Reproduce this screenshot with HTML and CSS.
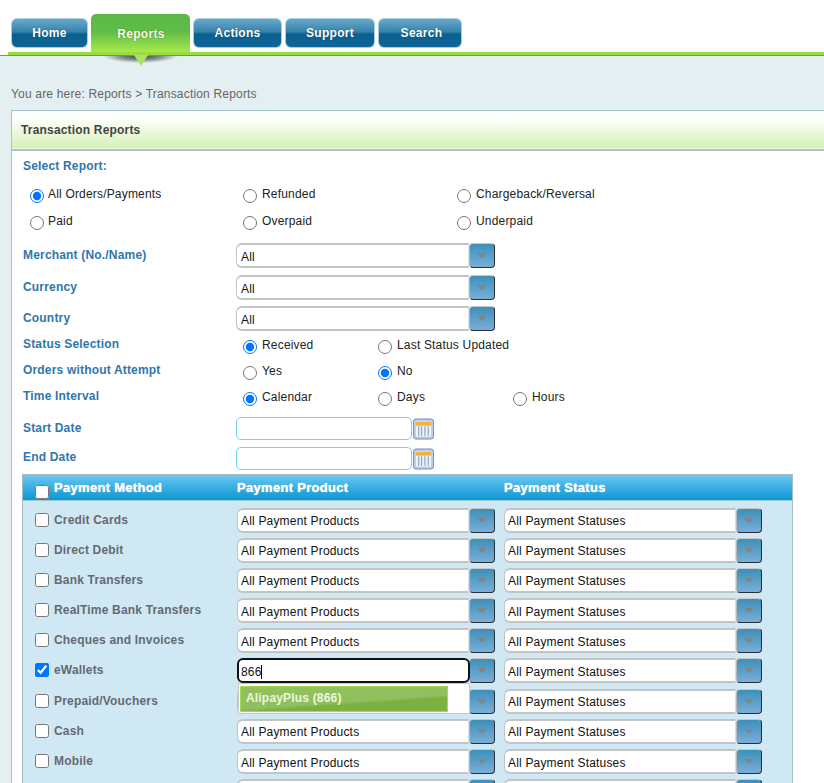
FILE: index.html
```html
<!DOCTYPE html>
<html lang="en">
<head>
<meta charset="utf-8">
<title>Transaction Reports</title>
<link rel="stylesheet" href="styles.css">
</head>
<body>
<svg class="defs" width="0" height="0" aria-hidden="true">
  <defs>
    <symbol id="cal" viewBox="0 0 22 22">
      <rect x="0.5" y="0.5" width="21" height="21" rx="2.5" fill="#b9cbe6" stroke="#6f8fc0"/>
      <rect x="3" y="3" width="16" height="16" fill="#eef3fa"/>
      <rect x="3" y="3.5" width="16" height="4" fill="#f2b03c"/>
      <path d="M6 8v10M9 8v10M12.500 8v10M16 8v10" stroke="#8ea7cf" stroke-width="1.300"/>
    </symbol>
  </defs>
</svg>
<nav class="nav">
  <a class="tab tab-home">Home</a>
  <a class="tab tab-active">Reports</a>
  <a class="tab tab-actions">Actions</a>
  <a class="tab tab-support">Support</a>
  <a class="tab tab-search">Search</a>
</nav>
<div class="nav-line"></div>
<main class="main">
  <p class="crumb">You are here: Reports &gt; Transaction Reports</p>
  <section class="panel">
    <h1 class="panel-title">Transaction Reports</h1>
    <div class="form">
      <div class="lbl lbl-report">Select Report:</div>
      <div class="radio-grid">
        <label class="opt"><input type="radio" name="r" checked>All Orders/Payments</label>
        <label class="opt"><input type="radio" name="r">Refunded</label>
        <label class="opt"><input type="radio" name="r">Chargeback/Reversal</label>
        <label class="opt"><input type="radio" name="r">Paid</label>
        <label class="opt"><input type="radio" name="r">Overpaid</label>
        <label class="opt"><input type="radio" name="r">Underpaid</label>
      </div>
      <div class="row row-select"><div class="lbl">Merchant (No./Name)</div><div class="combo"><input class="combo-input" value="All"><span class="combo-btn"></span></div></div>
      <div class="row row-select"><div class="lbl">Currency</div><div class="combo"><input class="combo-input" value="All"><span class="combo-btn"></span></div></div>
      <div class="row row-select"><div class="lbl">Country</div><div class="combo"><input class="combo-input" value="All"><span class="combo-btn"></span></div></div>
      <div class="row row-radio"><div class="lbl">Status Selection</div><div class="radios"><label class="opt"><input type="radio" name="s" checked>Received</label><label class="opt"><input type="radio" name="s">Last Status Updated</label></div></div>
      <div class="row row-radio"><div class="lbl">Orders without Attempt</div><div class="radios"><label class="opt"><input type="radio" name="o">Yes</label><label class="opt"><input type="radio" name="o" checked>No</label></div></div>
      <div class="row row-radio"><div class="lbl">Time Interval</div><div class="radios"><label class="opt"><input type="radio" name="t" checked>Calendar</label><label class="opt"><input type="radio" name="t">Days</label><label class="opt"><input type="radio" name="t">Hours</label></div></div>
      <div class="row row-date"><div class="lbl">Start Date</div><input class="date"><svg class="cal" width="21" height="22"><use href="#cal"/></svg></div>
      <div class="row row-date"><div class="lbl">End Date</div><input class="date"><svg class="cal" width="21" height="22"><use href="#cal"/></svg></div>
      <div class="pay">
        <div class="pay-head"><label class="pay-h1"><input type="checkbox">Payment Method</label><span>Payment Product</span><span>Payment Status</span></div>
        <div class="pay-row"><label class="chk"><input type="checkbox">Credit Cards</label><div class="combo"><input class="combo-input" value="All Payment Products"><span class="combo-btn"></span></div><div class="combo"><input class="combo-input" value="All Payment Statuses"><span class="combo-btn"></span></div></div>
        <div class="pay-row"><label class="chk"><input type="checkbox">Direct Debit</label><div class="combo"><input class="combo-input" value="All Payment Products"><span class="combo-btn"></span></div><div class="combo"><input class="combo-input" value="All Payment Statuses"><span class="combo-btn"></span></div></div>
        <div class="pay-row"><label class="chk"><input type="checkbox">Bank Transfers</label><div class="combo"><input class="combo-input" value="All Payment Products"><span class="combo-btn"></span></div><div class="combo"><input class="combo-input" value="All Payment Statuses"><span class="combo-btn"></span></div></div>
        <div class="pay-row"><label class="chk"><input type="checkbox">RealTime Bank Transfers</label><div class="combo"><input class="combo-input" value="All Payment Products"><span class="combo-btn"></span></div><div class="combo"><input class="combo-input" value="All Payment Statuses"><span class="combo-btn"></span></div></div>
        <div class="pay-row"><label class="chk"><input type="checkbox">Cheques and Invoices</label><div class="combo"><input class="combo-input" value="All Payment Products"><span class="combo-btn"></span></div><div class="combo"><input class="combo-input" value="All Payment Statuses"><span class="combo-btn"></span></div></div>
        <div class="pay-row"><label class="chk"><input type="checkbox" checked>eWallets</label><div class="combo combo-focus"><input class="combo-input" value="866"><span class="caret"></span><span class="combo-btn"></span><ul class="menu"><li class="menu-item">AlipayPlus (866)</li></ul></div><div class="combo"><input class="combo-input" value="All Payment Statuses"><span class="combo-btn"></span></div></div>
        <div class="pay-row"><label class="chk"><input type="checkbox">Prepaid/Vouchers</label><div class="combo"><input class="combo-input" value="All Payment Products"><span class="combo-btn"></span></div><div class="combo"><input class="combo-input" value="All Payment Statuses"><span class="combo-btn"></span></div></div>
        <div class="pay-row"><label class="chk"><input type="checkbox">Cash</label><div class="combo"><input class="combo-input" value="All Payment Products"><span class="combo-btn"></span></div><div class="combo"><input class="combo-input" value="All Payment Statuses"><span class="combo-btn"></span></div></div>
        <div class="pay-row"><label class="chk"><input type="checkbox">Mobile</label><div class="combo"><input class="combo-input" value="All Payment Products"><span class="combo-btn"></span></div><div class="combo"><input class="combo-input" value="All Payment Statuses"><span class="combo-btn"></span></div></div>
        <div class="pay-row"><label class="chk"></label><div class="combo"><input class="combo-input" value=""><span class="combo-btn"></span></div><div class="combo"><input class="combo-input" value=""><span class="combo-btn"></span></div></div>
      </div>
    </div>
  </section>
</main>
</body>
</html>
```
FILE: styles.css
```css
* { box-sizing: border-box; }
html, body { margin: 0; height: 783px; overflow: hidden; background: #fff; }
body { font: 12px/15px "Liberation Sans", Arial, sans-serif; letter-spacing: 0.18px; color: #111; }
.defs { position: absolute; }

.nav { display: flex; align-items: flex-end; gap: 3px; height: 52px; padding-left: 11px; }
.tab { height: 30px; margin-bottom: 4px; padding-top: 1px; border: 1px solid #a9cfdf; border-radius: 6px; color: #fff; font-weight: bold; letter-spacing: 0.3px; display: flex; align-items: center; justify-content: center; text-shadow: 0 0 1px rgba(0,0,0,.5); background: linear-gradient(#6aa9cb 0, #3583ad 45%, #0b5f8f 55%, #0f6697 100%); }
.tab-home { width: 77px; }
.tab-active { width: 99px; height: 38px; margin-bottom: 0; padding: 2px 0 0 1px; border: 0; border-radius: 5px 5px 0 0; background: linear-gradient(#5ab848 0, #5fbc45 45%, #a6e94c 100%); position: relative; color: #fdfde8; }
.tab-active::before { content: ""; position: absolute; left: 12px; top: 42px; width: 75px; height: 7px; background: radial-gradient(ellipse 50% 100% at 50% 0, #39413a 0, rgba(90,100,95,.7) 55%, rgba(228,239,241,0) 100%); }
.tab-active::after { content: ""; position: absolute; left: 43px; top: 41px; border: 7px solid transparent; border-top: 11px solid #a8e465; border-bottom: 0; z-index: 1; }
.tab-actions { width: 89px; }
.tab-support { width: 90px; }
.tab-search { width: 84px; padding-left: 3px; }
.nav-line { height: 3px; margin-left: 8px; background: #97dd3e; }

.main { height: 728px; padding: 31px 0 0 11px; background: #e4eff1; border-top: 1px solid #6f8f7f; }
.crumb { margin: 0 0 8px; height: 15px; color: #666; }
.panel { width: 840px; height: 700px; background: #fff; border: 1px solid #a6c1c9; }
.panel-title { margin: 0; height: 40px; padding-left: 9px; font-size: 12px; line-height: 38px; font-weight: bold; color: #444; background: linear-gradient(#fff 0, #fbfef8 25%, #d4f0b2 100%); border-bottom: 2px solid #a9c3cc; box-shadow: inset 0 -1px 0 #eef6e6; }
.form { padding: 7px 0 0 11px; }

.lbl { color: #2f76ab; font-weight: bold; }
.lbl-report { height: 19px; padding-top: 1px; }
.radio-grid { display: grid; grid-template-columns: 213px 214px 220px; grid-auto-rows: 26.500px; padding: 10px 0 0 6px; height: 66px; }
.opt { display: inline-flex; align-items: flex-start; color: #222; white-space: nowrap; }
.opt input { width: 14px; height: 14px; margin: 2px 5px 0 1px; flex: none; }
.radio-grid .opt:nth-child(3n+1) input { margin-right: 4px; }

.row { display: flex; }
.row .lbl { width: 213px; flex: none; }
.row-select { height: 31.500px; }
.row-select .lbl { padding-top: 5px; }
.row-select .combo { width: 259px; }
.row-select .combo-input { width: 233px; padding: 3px 3px 0 4px; }
.row-radio { height: 26px; }
.row-select + .row-radio { margin-top: -1px; }
.row-radio + .row-date { margin-top: 2px; }
.row-radio .radios { display: grid; grid-template-columns: 135px 135px 120px; padding: 1px 0 0 6px; }
.row-date { height: 30px; align-items: flex-start; }
.row-date .lbl { padding-top: 4px; }
.row-date + .row-date { height: 27px; }
.row-date + .row-date .lbl { padding-top: 3px; }
.date { width: 176px; height: 23px; border: 1px solid #73d0f4; border-radius: 5px; background: #fff; margin: 0; }
.cal { margin: 1px 0 0 1px; }

.combo { display: flex; position: relative; width: 258px; height: 25px; }
.combo-input { width: 232px; height: 25px; padding: 2px 3px 0; border: 1px solid #c4c4c4; border-right-color: #ddd; border-width: 2px 1px; border-radius: 6px 0 0 6px; background: #fff; font: inherit; letter-spacing: inherit; color: #111; margin: 0; outline: 0; }
.combo-btn { width: 26px; height: 25px; flex: none; border: 1px solid #2a2f33; border-top-color: #c6c6c6; border-left-color: #b8b8b8; border-radius: 4px; background: linear-gradient(#3c90ba, #7aaed7); position: relative; }
.combo-btn::after { content: ""; position: absolute; left: 7px; top: 9px; border: 5px solid transparent; border-top: 5px solid #7e8488; border-bottom: 0; }

.pay { width: 771px; height: 400px; margin-left: -1px; background: #d0e8f3; border: 1px solid #a9bcc6; border-bottom: 0; }
.pay-head { display: grid; grid-template-columns: 214px 267px 1fr; height: 26px; align-items: center; color: #fff; font-size: 13px; letter-spacing: 0.3px; font-weight: bold; text-shadow: 0 0 1px #fff; background: linear-gradient(#6acaf2 0, #3eb0e3 45%, #0d97d4 100%); border-bottom: 1px solid #9cc; }
.pay-h1 { display: flex; align-items: center; padding-left: 11px; }
.pay-h1 input { width: 14px; height: 14px; margin: 10px 5px 0 1px; }
.pay-row { display: grid; grid-template-columns: 214px 267px 1fr; height: 30.200px; padding-top: 7px; }
.pay-row .combo { height: 25px; }
.chk { display: flex; align-items: flex-start; padding: 5px 0 0 11px; color: #646a72; font-weight: bold; }
.chk input { width: 14px; height: 14px; margin: 0 5px 0 1px; flex: none; }

.combo-focus .combo-input { width: 233px; margin-right: -1px; padding-left: 2px; border: 2px solid #111; border-radius: 6px; position: relative; z-index: 1; }
.caret { position: absolute; z-index: 2; left: 24px; top: 7px; width: 1px; height: 14px; background: #000; }
.menu { position: absolute; left: 1px; top: 25px; z-index: 3; width: 232px; height: 31px; margin: 0; padding: 2px 1px; list-style: none; background: #fff; border: 1px solid #c8c8c8; }
.menu-item { width: 208px; height: 26px; padding-left: 5px; line-height: 22px; border: 1px solid #a5d950; color: #eef6dc; font-weight: bold; background: linear-gradient(176deg, #92c160 0, #8fbf5e 58%, #79b03e 66%, #7cb340 100%); }
```
